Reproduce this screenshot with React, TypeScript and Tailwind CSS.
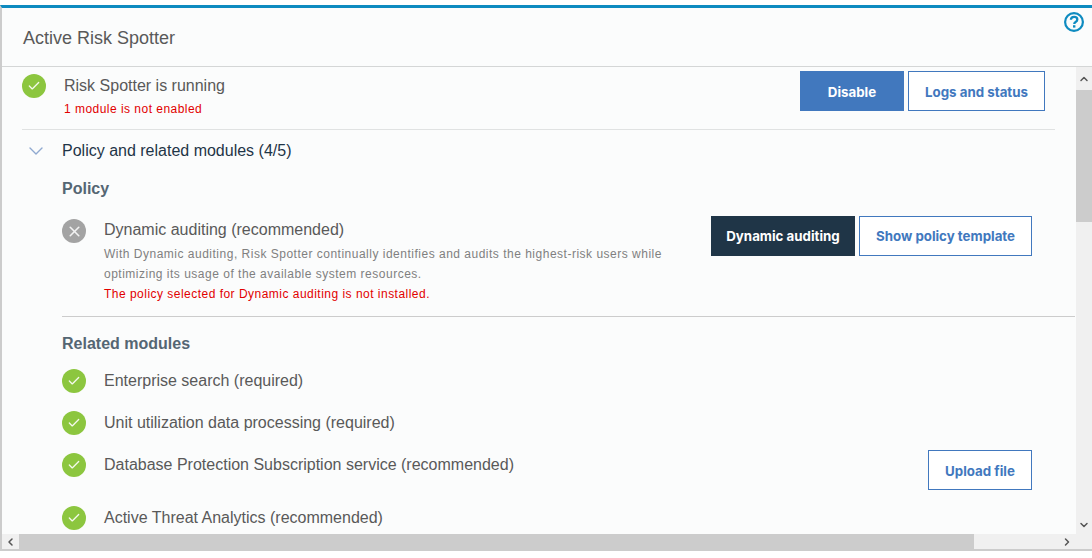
import { Check, X, ChevronDown, ChevronUp, ChevronLeft, ChevronRight } from "lucide-react";

const sans = "font-['Liberation_Sans',Arial,sans-serif]";
const btnBase = "flex items-center justify-center h-10 font-['Inter',sans-serif] text-[13.3px] font-bold";
const outlineBtn = `${btnBase} border border-[#4178be] text-[#4178be] bg-white`;

function StatusIcon({ ok = true }: { ok?: boolean }) {
  return (
    <span
      className={`flex h-6 w-6 shrink-0 items-center justify-center rounded-full ${ok ? "bg-[#8cc63f]" : "bg-[#a3a3a3]"}`}
    >
      {ok ? (
        <Check size={14} strokeWidth={2.25} color="#f4f9ec" />
      ) : (
        <X size={17} strokeWidth={2.25} color="#f2f2f2" />
      )}
    </span>
  );
}

function ModuleRow({ label, className = "" }: { label: string; className?: string }) {
  return (
    <div className={`flex items-center gap-[18px] h-6 ${className}`}>
      <StatusIcon />
      <span className="text-[16px] leading-6 text-[#595959]">{label}</span>
    </div>
  );
}

export default function App() {
  return (
    <div className={`h-[558px] w-[1092px] overflow-hidden bg-white pt-[5px] ${sans}`}>
      <div className="relative flex h-[546px] flex-col border-t-[3px] border-b-2 border-l-2 border-t-[#0e8bc0] border-b-[#cccccc] border-l-[#cccccc] bg-[#fbfcfc]">
        <svg
          className="absolute right-[8px] top-[4px]"
          width="20"
          height="20"
          viewBox="0 0 20 20"
          fill="none"
        >
          <circle cx="10" cy="10" r="8.9" stroke="#0e8bc0" strokeWidth="2.2" />
          <path
            d="M6.9 7.7c.1-1.9 1.4-2.9 3.2-2.9 1.9 0 3.2 1 3.2 2.6 0 1.3-.8 2-1.7 2.5-.9.5-1.3.9-1.3 1.8v.4"
            stroke="#0e8bc0"
            strokeWidth="2.3"
          />
          <rect x="9" y="13.2" width="2.4" height="2.4" fill="#0e8bc0" />
        </svg>

        <header className="h-[59px] shrink-0 border-b border-[#d4d6d6] pl-[21px] pt-[18px]">
          <h1 className="text-[18px] leading-6 text-[#595959]">Active Risk Spotter</h1>
        </header>

        <div className="flex min-h-0 flex-1">
          <div className="flex min-w-0 flex-1 flex-col">
            <main className="min-h-0 flex-1 overflow-hidden pl-5">
              <section className="flex h-[63px] w-[1033px] border-b border-[#e0e2e2] pt-[7px]">
                <StatusIcon />
                <div className="ml-[18px] flex-1">
                  <p className="text-[16px] leading-6 text-[#595959]">Risk Spotter is running</p>
                  <p className="mt-[3px] text-[12px] leading-4 tracking-[0.47px] text-[#e20000]">
                    1 module is not enabled
                  </p>
                </div>
                <div className="mr-[10px] flex gap-1 -mt-[3px]">
                  <button className={`${btnBase} pt-[4px] w-[104px] bg-[#4178be] text-white`}>Disable</button>
                  <button className={`${outlineBtn} pt-[4px] w-[137px]`}>Logs and status</button>
                </div>
              </section>

              <div className="flex h-[42px] items-center">
                <ChevronDown className="ml-[2px] mr-[14px]" size={24} strokeWidth={1.4} color="#8fa9d0" />
                <h2 className="text-[16px] leading-6 -mt-[1px] text-[#1f3547]">Policy and related modules (4/5)</h2>
              </div>

              <div className="pl-10">
                <h3 className="mt-[5px] text-[16px] font-bold leading-6 text-[#556673]">Policy</h3>

                <div className="flex h-[115px] pt-[18px]">
                  <StatusIcon ok={false} />
                  <div className="ml-[18px] w-[607px] shrink-0">
                    <p className="mt-[1px] text-[16px] leading-5 text-[#595959]">Dynamic auditing (recommended)</p>
                    <p className="mt-[4px] text-[12px] leading-5 tracking-[0.5px] text-[#808080]">
                      With Dynamic auditing, Risk Spotter continually identifies and audits the highest-risk users while
                      optimizing its usage of the available system resources.
                    </p>
                    <p className="mt-[1px] text-[12px] leading-[18px] tracking-[0.48px] text-[#e20000]">
                      The policy selected for Dynamic auditing is not installed.
                    </p>
                  </div>
                  <div className="flex h-10 gap-1 -mt-[3px]">
                    <button className={`${btnBase} pt-[2px] w-[144px] bg-[#1f3547] text-white`}>Dynamic auditing</button>
                    <button className={`${outlineBtn} pt-[2px] w-[173px]`}>Show policy template</button>
                  </div>
                </div>

                <div className="w-[1013px] border-t border-[#cccccc]" />

                <h3 className="mt-[15px] text-[16px] font-bold leading-6 text-[#556673]">Related modules</h3>

                <ModuleRow label="Enterprise search (required)" className="mt-[13px]" />
                <ModuleRow label="Unit utilization data processing (required)" className="mt-[18px]" />
                <div className="mt-[18px] flex w-[970px] items-start justify-between">
                  <ModuleRow label="Database Protection Subscription service (recommended)" />
                  <button className={`${outlineBtn} pt-[4px] w-[104px] -mt-[3px]`}>Upload file</button>
                </div>
                <ModuleRow label="Active Threat Analytics (recommended)" className="mt-[16px]" />
              </div>
            </main>

            <div className="flex h-[15px] shrink-0 items-center bg-[#f0f0f0]">
              <ChevronLeft className="w-[17px] shrink-0" size={12} strokeWidth={3} color="#555555" />
              <div className="h-[15px] w-[955px] bg-[#cccccc]" />
              <div className="flex-1" />
              <ChevronRight className="mr-[3px] shrink-0" size={12} strokeWidth={3} color="#555555" />
            </div>
          </div>

          <div className="flex w-4 shrink-0 flex-col bg-[#f0f0f0]">
            <div className="flex h-[23px] items-center justify-center">
              <ChevronUp size={12} strokeWidth={3} color="#555555" />
            </div>
            <div className="h-[132px] bg-[#cccccc]" />
            <div className="flex flex-1 items-end justify-center pb-[18px]">
              <ChevronDown size={12} strokeWidth={3} color="#555555" />
            </div>
          </div>
        </div>
      </div>
    </div>
  );
}
